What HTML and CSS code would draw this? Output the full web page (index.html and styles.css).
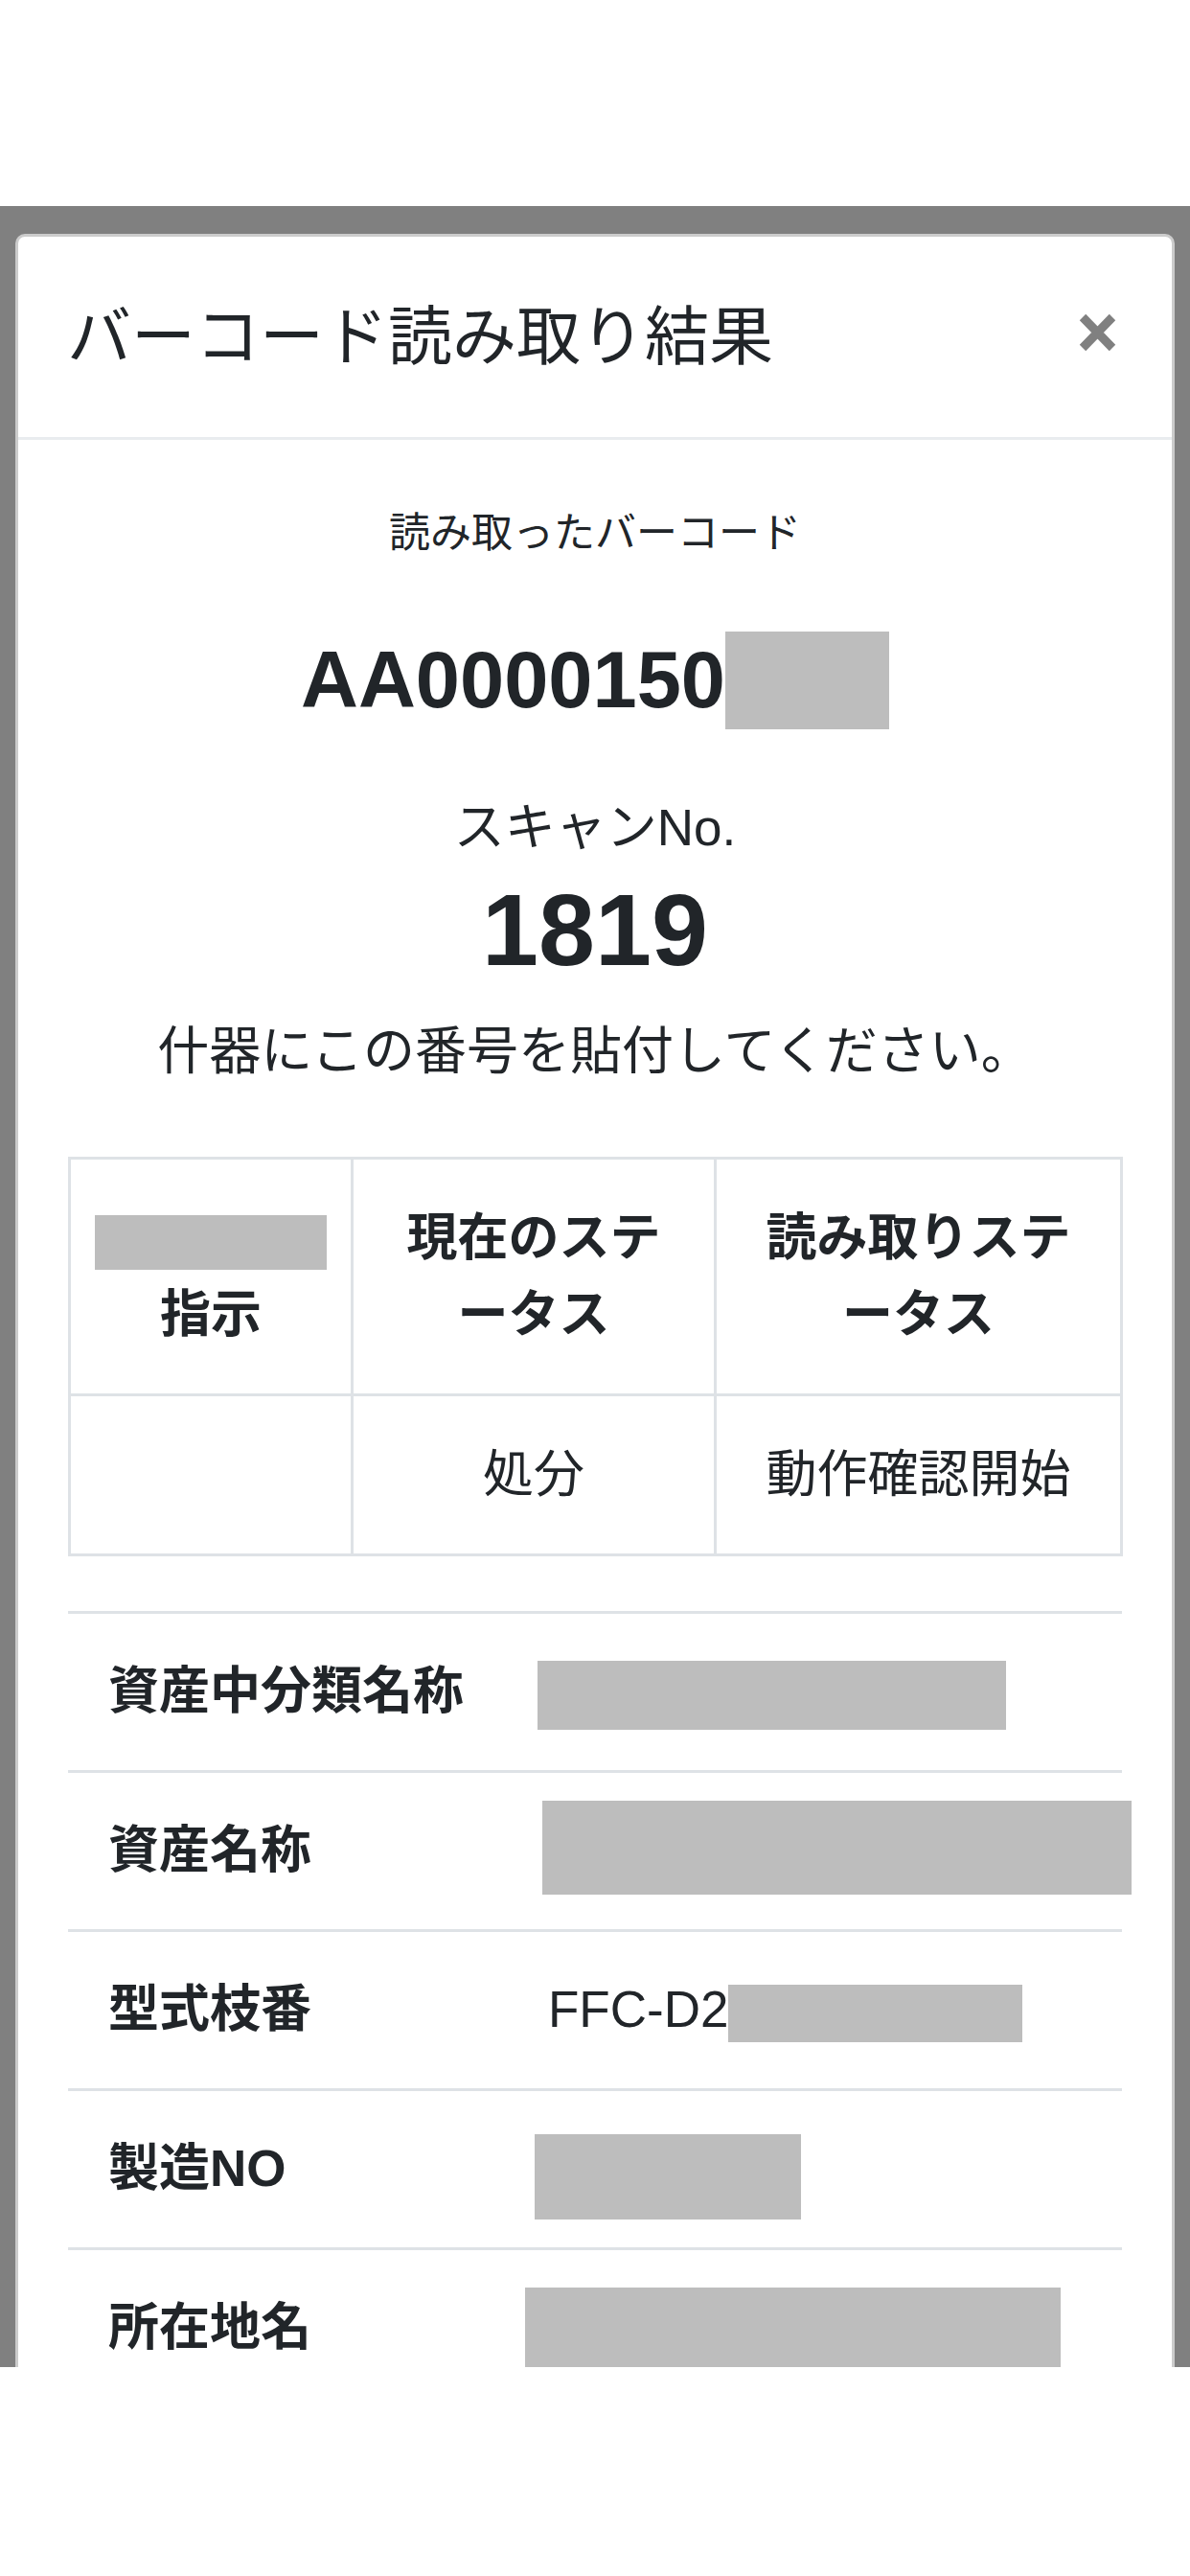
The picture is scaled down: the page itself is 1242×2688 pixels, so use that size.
FILE: index.html
```html
<!DOCTYPE html>
<html lang="ja">

<head>
    <meta charset="UTF-8">
    <meta name="viewport" content="width=device-width, initial-scale=1.0">
    <title>バーコード読み取り結果</title>
    <link rel="stylesheet" href="styles.css">
</head>

<body>
    <div class="backdrop">
        <div class="modal">
            <div class="modal-header">
                <h5 class="modal-title">バーコード読み取り結果</h5>
                <button class="close" type="button">
                    <svg width="41" height="40" viewBox="0 0 41 40">
                        <path d="M5 4 L36 36 M36 4 L5 36" stroke="#808080" stroke-width="9" fill="none" />
                    </svg>
                </button>
            </div>
            <div class="modal-body">
                <p class="caption">読み取ったバーコード</p>
                <h3 class="barcode">AA0000150<span class="redact barcode-mask"></span></h3>
                <p class="scan-label">スキャンNo.</p>
                <h2 class="scan-no">1819</h2>
                <p class="note">什器にこの番号を貼付してください。</p>

                <table class="status-table">
                    <colgroup>
                        <col class="c1">
                        <col class="c2">
                        <col class="c3">
                    </colgroup>
                    <tr>
                        <th><span class="redact head-mask"></span><br>指示</th>
                        <th>現在のステータス</th>
                        <th>読み取りステータス</th>
                    </tr>
                    <tr>
                        <td></td>
                        <td>処分</td>
                        <td>動作確認開始</td>
                    </tr>
                </table>

                <table class="detail-table">
                    <colgroup>
                        <col class="label-col">
                        <col>
                    </colgroup>
                    <tr>
                        <th>資産中分類名称</th>
                        <td><span class="redact r1"></span></td>
                    </tr>
                    <tr>
                        <th>資産名称</th>
                        <td><span class="redact r2"></span></td>
                    </tr>
                    <tr>
                        <th>型式枝番</th>
                        <td>FFC-D2<span class="redact r3"></span></td>
                    </tr>
                    <tr>
                        <th>製造NO</th>
                        <td><span class="redact r4"></span></td>
                    </tr>
                    <tr>
                        <th>所在地名</th>
                        <td><span class="redact r5"></span></td>
                    </tr>
                </table>
            </div>
        </div>
    </div>
</body>

</html>
```

FILE: styles.css
```css
* {
    padding: 0;
    margin: 0;
    box-sizing: border-box;
}

body {
    background-color: #fff;
    color: #212529;
    font-family: "Liberation Sans", "Noto Sans CJK JP", sans-serif;
    font-size: 53px;
}

.backdrop {
    margin-top: 215px;
    height: 2255px;
    padding: 29px 16px 0;
    background-color: #808080;
    overflow: hidden;
}

.modal {
    background-color: #fff;
    border: 3px solid rgba(0, 0, 0, .2);
    border-radius: 10px;
    height: 2400px;
}

.modal-header {
    display: flex;
    justify-content: space-between;
    align-items: center;
    padding: 55px 57px 55px 51px;
    border-bottom: 3px solid #e9ecef;
}

.modal-title {
    font-size: 67px;
    font-weight: 400;
    line-height: 99px;
}

.close {
    display: block;
    border: 0;
    background: none;
    margin-bottom: 9px;
}

.close svg {
    display: block;
}

.modal-body {
    padding: 65px 52px 0;
    text-align: center;
}

.caption {
    font-size: 43px;
    line-height: 64px;
}

.barcode {
    margin-top: 71px;
    font-size: 83px;
    font-weight: 700;
    line-height: 102px;
}

.scan-label {
    margin-top: 63px;
    line-height: 80px;
}

.scan-no {
    margin-top: 6px;
    font-size: 106px;
    font-weight: 700;
    line-height: 120px;
}

.note {
    margin-top: 27px;
    font-size: 54px;
    line-height: 80px;
}

.redact {
    display: inline-block;
    background-color: #bdbdbd;
    vertical-align: middle;
}

.barcode-mask {
    width: 171px;
    height: 102px;
    vertical-align: top;
}

/* status table */
.status-table {
    width: 100%;
    margin-top: 70px;
    border-collapse: collapse;
    table-layout: fixed;
    line-break: loose;
}

.status-table .c1 {
    width: 295px;
}

.status-table .c2 {
    width: 379px;
}

.status-table .c3 {
    width: 424px;
}

.status-table th,
.status-table td {
    border: 3px solid #dee2e6;
    padding: 42px 36px;
    line-height: 80px;
    text-align: center;
}

.status-table th {
    font-weight: 700;
}

.head-mask {
    width: 242px;
    height: 57px;
    margin: -28px -11px;
}

/* detail table */
.detail-table {
    width: 100%;
    margin-top: 57px;
    border-collapse: collapse;
    table-layout: fixed;
    text-align: left;
}

.detail-table .label-col {
    width: 461px;
}

.detail-table th,
.detail-table td {
    border-top: 3px solid #dee2e6;
    padding: 41px 40px 42px;
    line-height: 80px;
    white-space: nowrap;
}

.detail-table th {
    padding-left: 42px;
    font-weight: 700;
}

.r1 {
    width: 489px;
    height: 72px;
    margin: -36px 0 -36px -11px;
}

.r2 {
    width: 615px;
    height: 98px;
    margin: -56px 0 -42px -6px;
}

.r3 {
    width: 307px;
    height: 60px;
    margin: -30px 0;
}

.r4 {
    width: 278px;
    height: 89px;
    margin: -40px 0 -49px -14px;
}

.r5 {
    width: 559px;
    height: 85px;
    margin: -46px 0 -39px -24px;
}
```
